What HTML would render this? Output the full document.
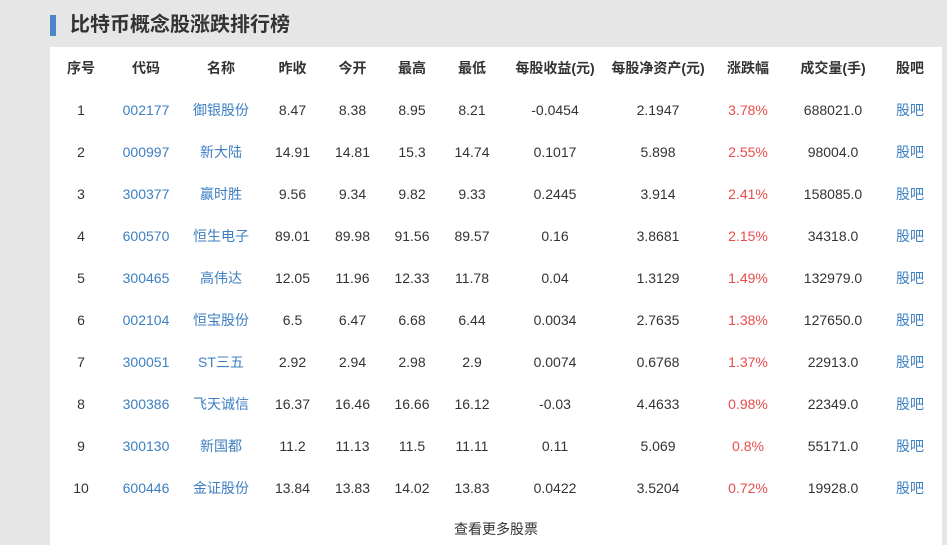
<!DOCTYPE html>
<html><head><meta charset="utf-8">
<style>
body{margin:0;width:947px;height:545px;background:#e6e6e6;font-family:"Liberation Sans","Noto Sans CJK SC",sans-serif;overflow:hidden;position:relative}
.bar{position:absolute;left:50px;top:15px;width:6px;height:21px;background:#4a88c9}
.title{position:absolute;left:70px;top:11px;font-size:20px;font-weight:bold;color:#333;line-height:28px}
.panel{position:absolute;left:50px;top:47px;width:892px;height:498px;background:#fff}
table{position:absolute;left:50px;top:47px;border-collapse:collapse;table-layout:fixed;font-size:14px;color:#333}
td,th{text-align:center;padding:0;height:42px;white-space:nowrap;vertical-align:middle;line-height:20px}
th{font-weight:bold}
.b{color:#3d7fc1}.red{color:#e84c4c}
.more{position:absolute;left:50px;width:892px;top:519px;text-align:center;font-size:14px;color:#333}
</style></head><body>
<div class="bar"></div><div class="title">比特币概念股涨跌排行榜</div>
<div class="panel"></div>
<table>
<colgroup><col style="width:62px"><col style="width:68px"><col style="width:82px"><col style="width:61px"><col style="width:59px"><col style="width:60px"><col style="width:60px"><col style="width:106px"><col style="width:100px"><col style="width:80px"><col style="width:90px"><col style="width:64px"></colgroup>
<tr><th>序号</th><th>代码</th><th>名称</th><th>昨收</th><th>今开</th><th>最高</th><th>最低</th><th>每股收益(元)</th><th>每股净资产(元)</th><th>涨跌幅</th><th>成交量(手)</th><th>股吧</th></tr>
<tr><td>1</td><td class="b">002177</td><td class="b">御银股份</td><td>8.47</td><td>8.38</td><td>8.95</td><td>8.21</td><td>-0.0454</td><td>2.1947</td><td class="red">3.78%</td><td>688021.0</td><td class="b">股吧</td></tr>
<tr><td>2</td><td class="b">000997</td><td class="b">新大陆</td><td>14.91</td><td>14.81</td><td>15.3</td><td>14.74</td><td>0.1017</td><td>5.898</td><td class="red">2.55%</td><td>98004.0</td><td class="b">股吧</td></tr>
<tr><td>3</td><td class="b">300377</td><td class="b">赢时胜</td><td>9.56</td><td>9.34</td><td>9.82</td><td>9.33</td><td>0.2445</td><td>3.914</td><td class="red">2.41%</td><td>158085.0</td><td class="b">股吧</td></tr>
<tr><td>4</td><td class="b">600570</td><td class="b">恒生电子</td><td>89.01</td><td>89.98</td><td>91.56</td><td>89.57</td><td>0.16</td><td>3.8681</td><td class="red">2.15%</td><td>34318.0</td><td class="b">股吧</td></tr>
<tr><td>5</td><td class="b">300465</td><td class="b">高伟达</td><td>12.05</td><td>11.96</td><td>12.33</td><td>11.78</td><td>0.04</td><td>1.3129</td><td class="red">1.49%</td><td>132979.0</td><td class="b">股吧</td></tr>
<tr><td>6</td><td class="b">002104</td><td class="b">恒宝股份</td><td>6.5</td><td>6.47</td><td>6.68</td><td>6.44</td><td>0.0034</td><td>2.7635</td><td class="red">1.38%</td><td>127650.0</td><td class="b">股吧</td></tr>
<tr><td>7</td><td class="b">300051</td><td class="b">ST三五</td><td>2.92</td><td>2.94</td><td>2.98</td><td>2.9</td><td>0.0074</td><td>0.6768</td><td class="red">1.37%</td><td>22913.0</td><td class="b">股吧</td></tr>
<tr><td>8</td><td class="b">300386</td><td class="b">飞天诚信</td><td>16.37</td><td>16.46</td><td>16.66</td><td>16.12</td><td>-0.03</td><td>4.4633</td><td class="red">0.98%</td><td>22349.0</td><td class="b">股吧</td></tr>
<tr><td>9</td><td class="b">300130</td><td class="b">新国都</td><td>11.2</td><td>11.13</td><td>11.5</td><td>11.11</td><td>0.11</td><td>5.069</td><td class="red">0.8%</td><td>55171.0</td><td class="b">股吧</td></tr>
<tr><td>10</td><td class="b">600446</td><td class="b">金证股份</td><td>13.84</td><td>13.83</td><td>14.02</td><td>13.83</td><td>0.0422</td><td>3.5204</td><td class="red">0.72%</td><td>19928.0</td><td class="b">股吧</td></tr>
</table>
<div class="more">查看更多股票</div>
</body></html>
